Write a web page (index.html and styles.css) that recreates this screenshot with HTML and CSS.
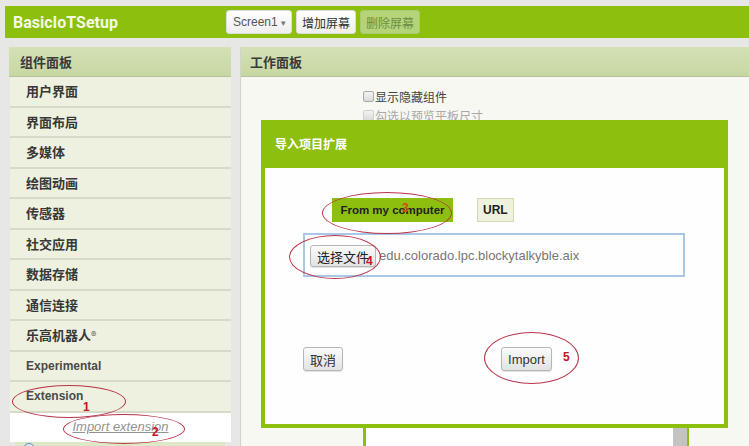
FILE: index.html
```html
<!DOCTYPE html>
<html lang="zh-CN">
<head>
  <meta charset="UTF-8" />
  <meta name="viewport" content="width=device-width, initial-scale=1.0" />
  <title>BasicIoTSetup - 设计器</title>
  <link rel="stylesheet" href="styles.css">
</head>
<body>
  <div class="topbar">
    <span class="project-name">BasicIoTSetup</span>
    <div class="screen-tools">
      <button class="tb-btn">Screen1 <span class="caret">▾</span></button>
      <button class="tb-btn">增加屏幕</button>
      <button class="tb-btn disabled">删除屏幕</button>
    </div>
  </div>

  <div class="workspace">
    <div class="palette">
      <div class="panel-head">组件面板</div>
      <div class="drawer">用户界面</div>
      <div class="drawer">界面布局</div>
      <div class="drawer">多媒体</div>
      <div class="drawer">绘图动画</div>
      <div class="drawer">传感器</div>
      <div class="drawer">社交应用</div>
      <div class="drawer">数据存储</div>
      <div class="drawer">通信连接</div>
      <div class="drawer">乐高机器人<span class="reg">®</span></div>
      <div class="drawer latin">Experimental</div>
      <div class="drawer latin">Extension</div>
      <div class="drawer-body">
        <a class="import-link">Import extension</a>
      </div>
      <div class="ext-item"><span class="ext-icon"></span></div>
    </div>

    <div class="viewer">
      <div class="panel-head">工作面板</div>
      <div class="viewer-body">
        <label class="opt"><input type="checkbox">显示隐藏组件</label>
        <label class="opt off"><input type="checkbox" disabled>勾选以预览平板尺寸</label>
        <div class="phone"><div class="phone-scroll"></div></div>
      </div>
    </div>
  </div>

  <!-- import extension dialog -->
  <div class="dialog">
    <div class="dialog-head">导入项目扩展</div>
    <div class="dialog-body">
      <div class="source-tabs">
        <button class="tab active">From my computer</button>
        <button class="tab">URL</button>
      </div>
      <div class="file-box">
        <button class="sys-btn">选择文件</button>
        <span class="file-name">edu.colorado.lpc.blockytalkyble.aix</span>
      </div>
      <div class="dialog-actions">
        <button class="sys-btn">取消</button>
        <button class="sys-btn import">Import</button>
      </div>
    </div>
  </div>

  <!-- step markers -->
  <div class="ring ring-1"></div><span class="step step-1">1</span>
  <div class="ring ring-2"></div><span class="step step-2">2</span>
  <div class="ring ring-3"></div><span class="step step-3">3</span>
  <div class="ring ring-4"></div><span class="step step-4">4</span>
  <div class="ring ring-5"></div><span class="step step-5">5</span>
</body>
</html>
```

FILE: styles.css
```css
html, body {
  margin: 0;
  padding: 0;
  height: 100%;
  overflow: hidden;
}

body {
  background: #e7e7e5;
  font-family: 'Liberation Sans', 'Noto Sans CJK SC', sans-serif;
  color: #333;
}

/* top bar */
.topbar {
  margin: 6px 0 0 5px;
  height: 32px;
  background: #8dbf0e;
  display: flex;
  align-items: center;
  padding-left: 8px;
}

.project-name {
  flex: 0 0 213px;
  font-family: Roboto, 'Liberation Sans', sans-serif;
  font-weight: 700;
  font-size: 16px;
  color: #f3f9e4;
}

.screen-tools {
  display: flex;
  gap: 4px;
}

.tb-btn {
  height: 24px;
  padding: 0 5px;
  border: 1px solid #dcdcdc;
  border-radius: 3px;
  background: linear-gradient(#ffffff, #eeeeee);
  font-family: 'Noto Sans CJK SC', sans-serif;
  font-size: 12px;
  color: #333;
}

.tb-btn:first-child {
  padding: 0 5px 0 6px;
  font-family: 'Liberation Sans', sans-serif;
  color: #555;
}

.caret {
  font-size: 9px;
  color: #777;
}

.tb-btn.disabled {
  background: #b5d378;
  border-color: #a9ca6e;
  color: #6c8f44;
}

/* two columns */
.workspace {
  display: flex;
  margin-top: 9px;
  height: 420px;
}

.palette {
  width: 222px;
  margin-left: 9px;
}

.viewer {
  flex: 1;
  margin-left: 9px;
  display: flex;
  flex-direction: column;
  border-left: 1px solid #d2d4cc;
}

.panel-head {
  box-sizing: border-box;
  height: 30px;
  line-height: 29px;
  padding-left: 11px;
  background: linear-gradient(#d4e1b6, #c7d7a2);
  border-bottom: 1px solid #b7c19c;
  font-family: 'Noto Sans CJK SC', sans-serif;
  font-weight: 700;
  font-size: 13px;
  color: #3a3a3a;
}

.viewer .panel-head {
  padding-left: 9px;
}

.drawer {
  box-sizing: border-box;
  height: 30.55px;
  line-height: 28px;
  padding-left: 16px;
  margin-left: 1px;
  background: #eef1e0;
  border-bottom: 2px solid #d7dac9;
  font-family: 'Noto Sans CJK SC', sans-serif;
  font-weight: 700;
  font-size: 13px;
  color: #383838;
}

.drawer .reg {
  font-weight: 400;
  font-size: 11px;
  color: #555;
}

.drawer.latin {
  font-family: 'Liberation Sans', sans-serif;
  font-size: 12px;
  color: #4a4a4a;
}

.drawer-body {
  height: 29px;
  margin-left: 1px;
  background: #fff;
  text-align: center;
  line-height: 26px;
}

.import-link {
  font-style: italic;
  font-size: 13px;
  color: #929292;
  text-decoration: underline;
}

.ext-item {
  height: 8px;
  margin: 0 6px 0 6px;
  background: #dfe8c6;
  position: relative;
}

.ext-icon {
  position: absolute;
  left: 8px;
  top: 1px;
  width: 10px;
  height: 10px;
  border-radius: 50%;
  border: 1px solid #5b8fd0;
  background: #dbe9f8;
}

/* viewer */
.viewer-body {
  flex: 1;
  background: #f7f8f1;
  padding: 10px 0 0 122px;
  overflow: hidden;
}

.opt {
  display: flex;
  align-items: center;
  height: 19px;
  font-family: 'Noto Sans CJK SC', sans-serif;
  font-size: 12px;
  color: #444;
}

.opt input {
  appearance: none;
  width: 11px;
  height: 11px;
  margin: 0 1px 0 0;
  border: 1px solid #a9a9a9;
  border-radius: 2px;
  background: linear-gradient(#f4f4f4, #dadada);
}

.opt.off {
  color: #a8a8a8;
}

.opt.off input {
  border-color: #cfcfcf;
}

.phone {
  margin-top: 4px;
  box-sizing: border-box;
  width: 326px;
  height: 400px;
  border-left: 3px solid #8dbf0e;
  border-right: 2px solid #8dbf0e;
  background: #fff;
  display: flex;
  justify-content: flex-end;
}

.phone-scroll {
  width: 14px;
  background: #c3c3c3;
}

/* dialog */
.dialog {
  position: absolute;
  left: 261px;
  top: 120px;
  width: 467px;
  height: 308px;
  box-sizing: border-box;
  border: 4px solid #8dbf0e;
  border-top: 0;
  background: #fefefe;
  display: flex;
  flex-direction: column;
}

.dialog-head {
  height: 48px;
  line-height: 48px;
  padding-left: 10px;
  background: #8dbf0e;
  font-family: 'Noto Sans CJK SC', sans-serif;
  font-weight: 700;
  font-size: 12px;
  color: #fff;
}

.dialog-body {
  flex: 1;
  padding-top: 30px;
}

.source-tabs {
  display: flex;
  gap: 24px;
  margin-left: 67px;
}

.tab {
  height: 24px;
  border: 1px solid #d3d8b6;
  background: #eef1dc;
  font-family: 'Liberation Sans', sans-serif;
  font-weight: 700;
  font-size: 12px;
  color: #222;
  padding: 0 5px;
  white-space: nowrap;
}

.tab.active {
  width: 121px;
  padding: 0;
  border-color: #8dbf0e;
  background: #8dbf0e;
  font-size: 11.5px;
}

.file-box {
  box-sizing: border-box;
  width: 382px;
  height: 44px;
  margin: 11px 0 0 38px;
  border: 2px solid #a9c8e7;
  padding: 10px 0 0 5px;
  display: flex;
  align-items: flex-start;
}

.sys-btn {
  height: 22px;
  padding: 0 6px;
  border: 1px solid #b6b6b6;
  border-radius: 3px;
  background: linear-gradient(#fbfbfb, #e2e2e2);
  box-shadow: 0 1px 1px rgba(0, 0, 0, 0.12);
  font-family: 'Liberation Sans', 'Noto Sans CJK SC', sans-serif;
  font-size: 13px;
  color: #222;
}

.file-name {
  margin-left: 3px;
  line-height: 22px;
  font-size: 13px;
  color: #777;
}

.dialog-actions {
  display: flex;
  margin: 70px 0 0 38px;
}

.dialog-actions .sys-btn {
  height: 24px;
  color: #333;
}

.dialog-actions .import {
  margin-left: 158px;
}

/* red hand-drawn step rings */
.ring {
  position: absolute;
  border: 1px solid #b8364a;
  border-radius: 50%;
}

.ring-1 { left: 12px;  top: 385px; width: 112px; height: 31px; }
.ring-2 { left: 63px;  top: 414px; width: 120px; height: 28px; }
.ring-3 { left: 322px; top: 192px; width: 128px; height: 40px; }
.ring-4 { left: 289px; top: 235px; width: 90px;  height: 42px; }
.ring-5 { left: 484px; top: 332px; width: 93px;  height: 50px; }

.step {
  position: absolute;
  font-family: 'Liberation Sans', sans-serif;
  font-weight: 700;
  font-size: 12px;
  line-height: 12px;
  color: #c8102e;
}

.step-1 { left: 83px;  top: 401px; }
.step-2 { left: 152px; top: 426px; }
.step-3 { left: 402px; top: 202px; color: #e0401c; }
.step-4 { left: 366px; top: 255px; }
.step-5 { left: 563px; top: 351px; }
```
